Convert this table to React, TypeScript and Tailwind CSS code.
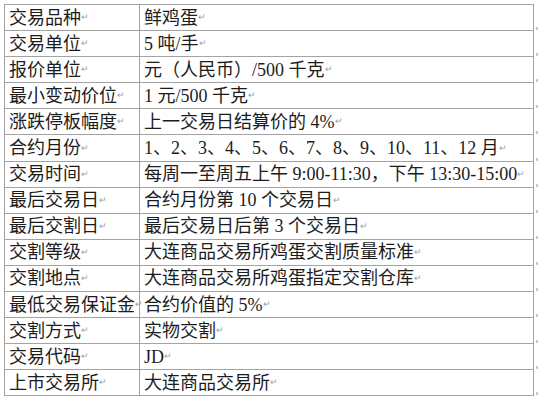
const rows: [string, string][] = [
  ["交易品种", "鲜鸡蛋"],
  ["交易单位", "5 吨/手"],
  ["报价单位", "元（人民币）/500 千克"],
  ["最小变动价位", "1 元/500 千克"],
  ["涨跌停板幅度", "上一交易日结算价的 4%"],
  ["合约月份", "1、2、3、4、5、6、7、8、9、10、11、12 月"],
  ["交易时间", "每周一至周五上午 9:00-11:30，下午 13:30-15:00"],
  ["最后交易日", "合约月份第 10 个交易日"],
  ["最后交割日", "最后交易日后第 3 个交易日"],
  ["交割等级", "大连商品交易所鸡蛋交割质量标准"],
  ["交割地点", "大连商品交易所鸡蛋指定交割仓库"],
  ["最低交易保证金", "合约价值的 5%"],
  ["交割方式", "实物交割"],
  ["交易代码", "JD"],
  ["上市交易所", "大连商品交易所"],
];

function Mark() {
  return <span className="text-[9px] text-gray-400 align-baseline">↵</span>;
}

export default function App() {
  return (
    <div
      className="w-[539px] h-[400px] bg-white pt-[4px] pl-[4px] text-[#1c1c1c]"
      style={{ fontFamily: '"Liberation Serif", "Noto Sans CJK SC", serif' }}
    >
      <div className="flex">
        <div className="w-[530px] border-l border-t border-[#a3a3a3]">
          {rows.map(([k, v]) => (
            <div key={k} className="flex h-[26.1px] border-b border-[#a3a3a3]">
              <div className="w-[135px] shrink-0 border-r border-[#a3a3a3] pl-[4px] flex items-center whitespace-nowrap overflow-visible text-[18px] leading-none">
                {k}
                <Mark />
              </div>
              <div className="flex-1 border-r border-[#a3a3a3] pl-[4px] flex items-center whitespace-nowrap text-[18px] leading-none">
                {v}
                <Mark />
              </div>
            </div>
          ))}
        </div>
        <div className="flex flex-col">
          {rows.map(([k]) => (
            <div key={k} className="h-[26.1px] flex items-end pl-[2px]">
              <span className="w-[2px] h-[3px] bg-[#c8c8c8]" />
            </div>
          ))}
        </div>
      </div>
    </div>
  );
}
